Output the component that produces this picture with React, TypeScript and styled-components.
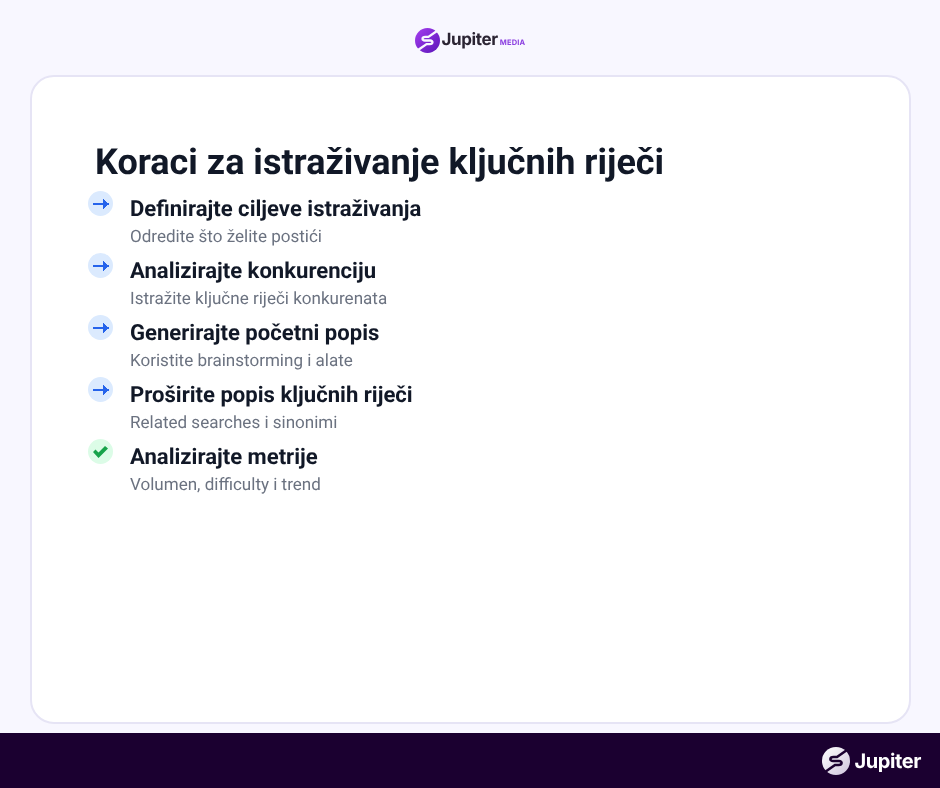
import React from "react";
import styled, { createGlobalStyle } from "styled-components";

const GlobalStyle = createGlobalStyle`
  html, body {
    margin: 0;
    padding: 0;
    background: #f8f7ff;
    font-family: "Roboto", "Liberation Sans", sans-serif;
    text-rendering: geometricPrecision;
  }
`;

const Page = styled.div`
  width: 940px;
  height: 788px;
  display: flex;
  flex-direction: column;
  overflow: hidden;
  will-change: transform;
`;
const TopBar = styled.header`
  height: 75px;
  flex: 0 0 auto;
  display: flex;
  justify-content: center;
  padding-top: 27px;
  box-sizing: border-box;
`;
const Brand = styled.div`
  display: flex;
  align-items: center;
  height: 26px;
`;
const WordMark = styled.span<{ $size: number; $color: string }>`
  font-family: "Inter", "Liberation Sans", sans-serif;
  font-weight: 700;
  font-size: ${(props) => props.$size}px;
  color: ${(props) => props.$color};
  letter-spacing: -0.4px;
  line-height: 1;
`;
const MediaTag = styled.span`
  font-family: "Inter", "Liberation Sans", sans-serif;
  font-weight: 700;
  font-size: 7.5px;
  color: #8b3fe0;
  margin-left: 2px;
  margin-top: 5px;
  letter-spacing: 0.2px;
`;
const Card = styled.main`
  margin: 0 29px 0 30px;
  height: 649px;
  flex: 0 0 auto;
  box-sizing: border-box;
  background: #fff;
  border: 2px solid #e6e4f5;
  border-radius: 24px;
  padding: 60px 56px;
`;
const Title = styled.h1`
  margin: 0 0 4px 7px;
  font-size: 36px;
  line-height: 50px;
  font-weight: 700;
  color: #111827;
`;
const Steps = styled.ul`
  list-style: none;
  margin: 0;
  padding: 0;
`;
const Step = styled.li`
  display: flex;
  height: 62px;
`;
const Badge = styled.span<{ $done?: boolean }>`
  width: 25px;
  height: 25px;
  flex: 0 0 auto;
  margin-right: 17px;
  border-radius: 50%;
  display: flex;
  align-items: center;
  justify-content: center;
  background: ${(props) => (props.$done ? "#dcfce7" : "#dbeafe")};
`;
const StepText = styled.div`
  padding-top: 4px;
`;
const StepTitle = styled.div`
  font-size: 22.08px;
  line-height: 30px;
  font-weight: 700;
  color: #111827;
`;
const StepSub = styled.div`
  font-size: 17.05px;
  line-height: 24px;
  color: #6b7280;
`;
const Footer = styled.footer`
  margin-top: 9px;
  flex: 1;
  background: #1b0030;
  display: flex;
  justify-content: flex-end;
  align-items: center;
  padding-right: 19px;
`;

function LogoMark({ size, id, light, gap }: { size: number; id: string; light?: boolean; gap: number }) {
  return (
    <svg width={size} height={size} viewBox="0 0 28 28" style={{ marginRight: gap }}>
      <defs>
        <linearGradient id={id} x1="0" y1="0" x2="1" y2="1">
          <stop offset="0" stopColor={light ? "#ffffff" : "#a63ff0"} />
          <stop offset="1" stopColor={light ? "#cfc4dc" : "#5a14b8"} />
        </linearGradient>
      </defs>
      <circle cx="14" cy="14" r="14" fill={`url(#${id})`} />
      <path
        d="M25 3 L15 10 H11.5 C7.5 10 7.5 14 11 14 H17 C20.5 14 20.5 18 16.5 18 H13 L3 25"
        fill="none"
        stroke={light ? "#1b0030" : "#f8f7ff"}
        strokeWidth="2.6"
      />
    </svg>
  );
}

function ArrowIcon() {
  return (
    <svg width="16" height="10" viewBox="0 0 16 10" shapeRendering="crispEdges">
      <path d="M0 4 H10 V0 H11 V1 H12 V2 H13 V3 H14 V4 H16 V6 H14 V7 H13 V8 H12 V9 H11 V10 H10 V6 H0 Z" fill="#2563eb" />
    </svg>
  );
}

function CheckIcon() {
  return (
    <svg width="15" height="12" viewBox="0 0 15 12">
      <path d="M0 6 L2.5 3.5 L5.5 6.5 L12 0 L15 2.5 L5.5 12 Z" fill="#16a34a" />
    </svg>
  );
}

const steps = [
  { title: "Definirajte ciljeve istraživanja", sub: "Odredite što želite postići" },
  { title: "Analizirajte konkurenciju", sub: "Istražite ključne riječi konkurenata" },
  { title: "Generirajte početni popis", sub: "Koristite brainstorming i alate" },
  { title: "Proširite popis ključnih riječi", sub: "Related searches i sinonimi" },
  { title: "Analizirajte metrije", sub: "Volumen, difficulty i trend", done: true },
];

export default function App() {
  return (
    <Page>
      <GlobalStyle />
      <TopBar>
        <Brand>
          <LogoMark size={25} id="logoTop" gap={2} />
          <WordMark $size={17} $color="#2b2433">Jupiter</WordMark>
          <MediaTag>MEDIA</MediaTag>
        </Brand>
      </TopBar>
      <Card>
        <Title>Koraci za istraživanje ključnih riječi</Title>
        <Steps>
          {steps.map((step) => (
            <Step key={step.title}>
              <Badge $done={step.done}>{step.done ? <CheckIcon /> : <ArrowIcon />}</Badge>
              <StepText>
                <StepTitle>{step.title}</StepTitle>
                <StepSub>{step.sub}</StepSub>
              </StepText>
            </Step>
          ))}
        </Steps>
      </Card>
      <Footer>
        <Brand>
          <LogoMark size={28} id="logoBottom" light gap={4} />
          <WordMark $size={20} $color="#ffffff">Jupiter</WordMark>
        </Brand>
      </Footer>
    </Page>
  );
}
